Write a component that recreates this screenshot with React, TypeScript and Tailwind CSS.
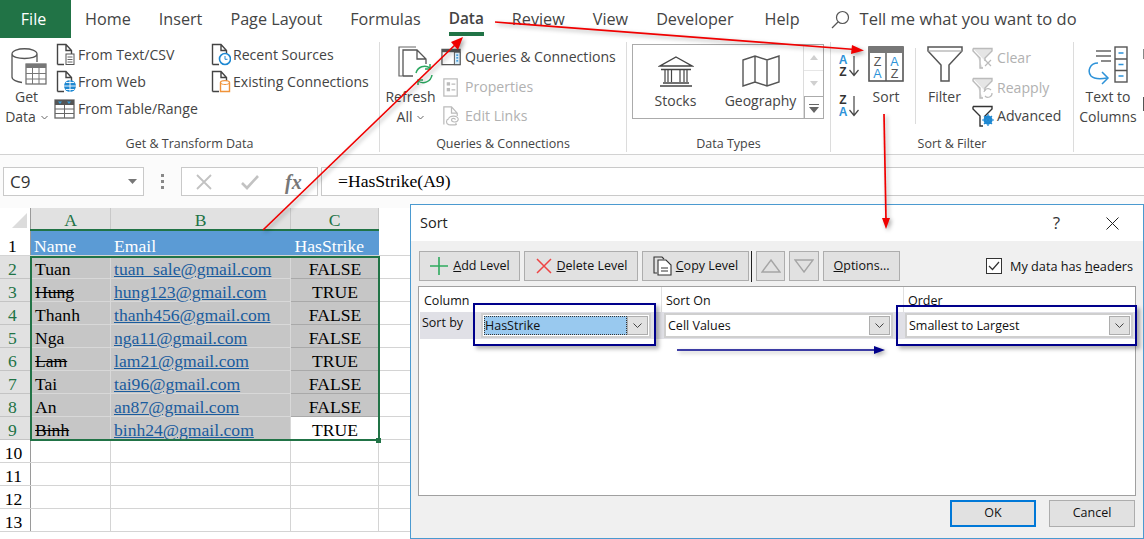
import React from "react";

const UI = "font-['Open_Sans',sans-serif]";

function Doc({ c = "#444", children }: { c?: string; children?: React.ReactNode }) {
  return (
    <svg width="20" height="23" viewBox="0 0 20 23" fill="none" className="shrink-0">
      <path d="M1.5 21.5V1.5H10L15.5 7.5V12M1.5 21.5H8M10 1.5V7.5H15.5" stroke={c} strokeWidth="1.4" />
      {children}
    </svg>
  );
}

function RibbonRow({ icon, text, dim, h = 27 }: { icon: React.ReactNode; text: string; dim?: boolean; h?: number }) {
  return (
    <div className={`flex items-center gap-[2px] whitespace-nowrap text-[14.1px] ${dim ? "text-[#b1b1b1]" : "text-[#444]"}`} style={{ height: h }}>
      {icon}
      <span>{text}</span>
    </div>
  );
}

function Group({ w, label, children, border = true }: { w: number; label: string; children: React.ReactNode; border?: boolean }) {
  return (
    <div className={`flex flex-col shrink-0 mt-[4px] mb-[2px] ${border ? "border-r border-[#dcdcdc]" : ""}`} style={{ width: w }}>
      <div className="flex h-[94px]">{children}</div>
      <div className="h-[16px] flex items-center justify-center text-[12.5px] text-[#444] whitespace-nowrap">{label}</div>
    </div>
  );
}

function BigLabel({ a, b, chev }: { a: string; b?: string; chev?: boolean }) {
  return (
    <div className="flex flex-col items-center text-[14px] leading-[20px] text-[#444] whitespace-nowrap">
      <span>{a}</span>
      {b && (
        <span className="flex items-center gap-[5px]">
          {b}
          {chev && (
            <svg width="7" height="5" viewBox="0 0 7 5" fill="none"><path d="M.5 1l3 3 3-3" stroke="#666" /></svg>
          )}
        </span>
      )}
    </div>
  );
}

function Ribbon() {
  return (
    <div className={`flex h-[117px] border-b border-[#d2d2d2] bg-white shadow-[0_1px_1px_rgba(0,0,0,0.06)] ${UI}`}>
      <Group w={380} label="Get & Transform Data">
        <div className="w-[53px] pt-[4px] flex flex-col items-center shrink-0">
          <svg width="36" height="40" viewBox="0 0 36 40" fill="none" className="ml-[5px]">
            <path d="M1 8C1 1 26 1 26 8V16M1 8V31C1 34 6 36 11 36.5M1 8C1 14 26 14 26 8" stroke="#555" strokeWidth="1.3" />
            <rect x="15" y="18" width="20" height="20" fill="#fff" stroke="#666" strokeWidth="1.2" />
            <rect x="15" y="18" width="20" height="4" fill="#777" />
            <path d="M15 27.5H35M15 33H35M21.5 22V38M28 22V38" stroke="#777" />
          </svg>
          <div className="mt-[1px]"><BigLabel a="Get" b="Data" chev /></div>
        </div>
        <div className="w-[158px] shrink-0 -mt-[1px] pl-[3px]">
          <RibbonRow text="From Text/CSV" icon={
            <Doc><rect x="10" y="11" width="8" height="10.5" fill="#fff" stroke="#555" /><path d="M11.5 14h5M11.5 16.5h5M11.5 19h5" stroke="#666" /></Doc>
          } />
          <RibbonRow text="From Web" icon={
            <Doc><circle cx="14" cy="16" r="6" fill="#1e88d2" /><path d="M8 16h12M14 10v12M10 12.5h8M10 19.5h8" stroke="#fff" strokeWidth=".9" /></Doc>
          } />
          <div className="-ml-[2px]">
            <RibbonRow text="From Table/Range" icon={
              <svg width="22" height="20" viewBox="0 0 22 20" fill="none" className="shrink-0">
                <rect x="1" y="1" width="19" height="18" fill="#fff" stroke="#666" strokeWidth="1.3" />
                <rect x="1" y="1" width="19" height="5" fill="#555" />
                <path d="M4 2.5h4l-2 2.5zM13 2.5h4l-2 2.5z" fill="#35a0e0" />
                <path d="M1 10h19M1 14.5h19M10.5 6v13" stroke="#666" />
              </svg>
            } />
          </div>
        </div>
        <div className="flex-1 -mt-[1px]">
          <RibbonRow text="Recent Sources" icon={
            <Doc><circle cx="14" cy="16" r="5.5" fill="#fff" stroke="#1e88d2" strokeWidth="1.6" /><path d="M14 13v3.3h2.5" stroke="#1e88d2" /></Doc>
          } />
          <RibbonRow text="Existing Connections" icon={
            <Doc><path d="M9.5 12.5C9.5 10 18.5 10 18.5 12.5V21.5H9.5Z" fill="#fff" stroke="#f0933a" strokeWidth="1.4" /><path d="M9.5 13C10.5 15 17.5 15 18.5 13" stroke="#f0933a" /></Doc>
          } />
        </div>
      </Group>

      <Group w={247} label="Queries & Connections">
        <div className="w-[61px] pt-[4px] flex flex-col items-center shrink-0">
          <svg width="38" height="40" viewBox="0 0 38 40" fill="none" className="ml-[12px]">
            <path d="M5 30H1V1H18" stroke="#666" strokeWidth="1.2" />
            <path d="M5 30V4H19L28 13V18M5 30H15M19 4V13H28" stroke="#555" strokeWidth="1.3" />
            <path d="M18 27A9 9 0 0 1 32 22M34 29A9 9 0 0 1 20 35" stroke="#2aa860" strokeWidth="1.5" />
            <path d="M32 18V23H27M20 39V34H25" stroke="#2aa860" strokeWidth="1.5" />
          </svg>
          <div className="mt-[1px]"><BigLabel a="Refresh" b="All" chev /></div>
        </div>
        <div className="flex-1">
          <RibbonRow h={30} text="Queries & Connections" icon={
            <svg width="21" height="20" viewBox="0 0 22 20" fill="none" className="shrink-0 mr-[1px]">
              <rect x="1" y="2" width="19" height="16" fill="#fff" stroke="#555" strokeWidth="1.3" />
              <rect x="1" y="2" width="19" height="3" fill="#555" />
              <rect x="14" y="5" width="6" height="13" fill="#d6ebf8" stroke="#555" />
              <path d="M16 8h2M16 11h2M16 14h2" stroke="#1e88d2" strokeWidth="1.4" />
            </svg>
          } />
          <RibbonRow dim h={29} text="Properties" icon={
            <svg width="21" height="20" viewBox="0 0 22 20" fill="none" className="shrink-0 mr-[1px]">
              <rect x="3" y="1.5" width="14" height="18" fill="#fff" stroke="#bbb" strokeWidth="1.3" />
              <rect x="6" y="5" width="3.5" height="3.5" fill="#bbb" /><rect x="6" y="11" width="3.5" height="3.5" fill="#bbb" />
              <path d="M11 7h4M11 13h4" stroke="#bbb" strokeWidth="1.4" />
            </svg>
          } />
          <RibbonRow dim h={29} text="Edit Links" icon={
            <svg width="21" height="22" viewBox="0 0 22 22" fill="none" className="shrink-0 mr-[1px]">
              <path d="M3 20V1.5H11L17 8V11M11 1.5V8H17" stroke="#bbb" strokeWidth="1.3" />
              <path d="M8 14C8 10 19 10 18 15C17 18 11 18 11 15C11 13 15 13 15 15M15 19C19 20 12 21 8 20C5 19 5 15 8 14" stroke="#bbb" strokeWidth="1.2" />
            </svg>
          } />
        </div>
      </Group>

      <Group w={204} label="Data Types">
        <div className="flex ml-[5px] mt-[2px] h-[75px] w-[192px] border border-[#ababab]">
          <div className="w-[85px] pt-[10px] flex flex-col items-center shrink-0">
            <svg width="36" height="32" viewBox="0 0 36 32" fill="none">
              <path d="M18 2L34 11H2ZM3 14.5H33M5 28H31M2 31H34" stroke="#444" strokeWidth="1.4" />
              <path d="M7 15V27M13.5 15V27M22 15V27M29 15V27M10 15V27M26 15V27" stroke="#444" strokeWidth="1.2" />
            </svg>
            <span className="mt-[4px] text-[14px] leading-[20px] text-[#444]">Stocks</span>
          </div>
          <div className="w-[85px] pt-[10px] flex flex-col items-center shrink-0">
            <svg width="38" height="32" viewBox="0 0 38 32" fill="none">
              <path d="M1 5L13 1L25 5L37 1V27L25 31L13 27L1 31ZM13 1V27M25 5V31" stroke="#555" strokeWidth="1.4" />
            </svg>
            <span className="mt-[4px] text-[14px] leading-[20px] text-[#444] whitespace-nowrap">Geography</span>
          </div>
          <div className="flex-1 border-l border-[#dcdcdc] flex flex-col">
            <div className="h-[26px] border-b border-[#e6e6e6] flex items-center justify-center">
              <svg width="8" height="5" viewBox="0 0 8 5"><path d="M0 5L4 0L8 5Z" fill="#d0d0d0" /></svg>
            </div>
            <div className="h-[25px] flex items-center justify-center">
              <svg width="8" height="5" viewBox="0 0 8 5"><path d="M0 0L4 5L8 0Z" fill="#d0d0d0" /></svg>
            </div>
            <div className="flex-1 border border-[#ababab] -mr-px -mb-px flex items-center justify-center">
              <svg width="10" height="10" viewBox="0 0 10 10"><path d="M0 1h10V2H0zM0 4h10L5 10z" fill="#666" /></svg>
            </div>
          </div>
        </div>
      </Group>

      <Group w={243} label="Sort & Filter">
        <div className="w-[37px] shrink-0 pl-[7px] pt-[12px] flex flex-col gap-[16px]">
          <AZ first="A" second="Z" />
          <AZ first="Z" second="A" />
        </div>
        <div className="pt-[4px] w-[36px] shrink-0 flex flex-col items-center">
          <svg width="36" height="36" viewBox="0 0 36 36" fill="none" className="shrink-0">
            <rect x="1" y="1" width="34" height="34" fill="#fff" stroke="#555" strokeWidth="1.6" />
            <rect x="1" y="1" width="34" height="6" fill="#777" />
            <path d="M18 7V35" stroke="#555" strokeWidth="1.4" />
            <text x="9.5" y="19.500" textAnchor="middle" fontSize="12.500" fill="#555" fontFamily="Liberation Sans">Z</text>
            <text x="9.5" y="32" textAnchor="middle" fontSize="12.500" fill="#2e93d9" fontFamily="Liberation Sans">A</text>
            <text x="26.5" y="19.500" textAnchor="middle" fontSize="12.500" fill="#2e93d9" fontFamily="Liberation Sans">A</text>
            <text x="26.5" y="32" textAnchor="middle" fontSize="12.500" fill="#555" fontFamily="Liberation Sans">Z</text>
          </svg>
          <div className="mt-[5px]"><BigLabel a="Sort" /></div>
        </div>
        <div className="w-px h-[76px] mt-[6px] ml-[11px] bg-[#dcdcdc] shrink-0" />
        <div className="w-[57px] pt-[4px] flex flex-col items-center shrink-0">
          <svg width="36" height="36" viewBox="0 0 36 36" fill="none" className="shrink-0">
            <path d="M1 1H35V5L22 19V35H14V19L1 5Z" fill="#fff" stroke="#555" strokeWidth="1.5" />
            <path d="M1 5H35" stroke="#999" />
          </svg>
          <div className="mt-[5px]"><BigLabel a="Filter" /></div>
        </div>
        <div className="flex-1 -ml-[1px]">
          <RibbonRow dim h={31} text="Clear" icon={<Funnel c="#bbb"><path d="M13 13l6 6M19 13l-6 6" stroke="#bbb" strokeWidth="1.2" /></Funnel>} />
          <RibbonRow dim h={29} text="Reapply" icon={<Funnel c="#bbb"><path d="M12 15A4 4 0 0 1 19 13M20 16A4 4 0 0 1 13 19" stroke="#bbb" strokeWidth="1.2" /></Funnel>} />
          <RibbonRow h={28} text="Advanced" icon={<Funnel c="#333"><circle cx="16" cy="15" r="4.5" fill="#1e88d2" /><circle cx="16" cy="15" r="1.5" fill="#fff" /><path d="M16 9v12M10 15h12M12 11l8 8M20 11l-8 8" stroke="#1e88d2" strokeWidth="1.2" /></Funnel>} />
        </div>
      </Group>

      <Group w={70} label="" border={false}>
        <div className="w-[66px] ml-[1px] pt-[4px] flex flex-col items-center shrink-0">
          <svg width="42" height="40" viewBox="0 0 42 40" fill="none" className="shrink-0">
            <path d="M9 5H24M9 10H24M14 15H24" stroke="#666" strokeWidth="1.4" />
            <rect x="28" y="1" width="12" height="35" fill="#fff" stroke="#555" strokeWidth="1.4" />
            <path d="M28 13H40M28 24.500H40" stroke="#555" strokeWidth="1.4" />
            <path d="M31.500 7H36.500M31.500 18.500H36.500M31.500 30H36.500" stroke="#2e93d9" strokeWidth="1.5" />
            <path d="M11 17C3 17 0 25 4 30C7 33 14 33 20 32" stroke="#2e93d9" strokeWidth="1.5" />
            <path d="M15 26L21 32L15 38" stroke="#2e93d9" strokeWidth="1.5" />
          </svg>
          <div className="mt-[1px]"><BigLabel a="Text to" b="Columns" /></div>
        </div>
        <div className="ml-auto w-[1px] flex flex-col">
          <div className="h-[10px] mt-[7px] bg-[#888]" />
          <div className="h-[14px] mt-[38px] bg-[#555]" />
        </div>
      </Group>
    </div>
  );
}

function AZ({ first, second }: { first: string; second: string }) {
  const col = (l: string) => (l === "A" ? "#2e93d9" : "#333");
  return (
    <svg width="22" height="24" viewBox="0 0 22 24" fill="none" className="shrink-0">
      <text x="5" y="10" textAnchor="middle" fontSize="12" fontWeight="700" fill={col(first)} fontFamily="Liberation Sans">{first}</text>
      <text x="5" y="22" textAnchor="middle" fontSize="12" fontWeight="700" fill={col(second)} fontFamily="Liberation Sans">{second}</text>
      <path d="M16 2V21M11.500 16L16 21.500L20.500 16" stroke="#444" strokeWidth="1.2" />
    </svg>
  );
}

function Funnel({ c, children }: { c: string; children: React.ReactNode }) {
  return (
    <svg width="22" height="22" viewBox="0 0 22 22" fill="none" className="shrink-0 mr-[1px]">
      <path d="M1 1.500H20V4L13 11V14M1 1.500V4L8 11V21H11" stroke={c} strokeWidth="1.4" fill={c === "#bbb" ? "#e5e5e5" : "none"} />
      {children}
    </svg>
  );
}

function Tabs() {
  const names = ["Home", "Insert", "Page Layout", "Formulas"];
  const rest = ["Review", "View", "Developer"];
  return (
    <div className={`flex h-[38px] items-center text-[16.2px] text-[#444] bg-white ${UI}`}>
      <div className="w-[71px] h-full flex items-center justify-center pr-[4px] bg-[#217346] text-white text-[16px]">File</div>
      <div className="flex gap-[28px] ml-[14px] items-center h-full">
        {names.map((n) => <span key={n} className="whitespace-nowrap">{n}</span>)}
        <span className="relative h-full flex items-center font-semibold text-[15.4px]">
          Data
          <span className="absolute left-0 right-0 bottom-[2px] h-[4px] bg-[#217346]" />
        </span>
        {rest.map((n) => <span key={n} className="whitespace-nowrap">{n}</span>)}
        <span className="whitespace-nowrap ml-[3px]">Help</span>
      </div>
      <div className="flex items-center ml-[31px] gap-[10px]">
        <svg width="19" height="19" viewBox="0 0 19 19" fill="none" className="shrink-0">
          <circle cx="11.500" cy="7.500" r="6" stroke="#555" strokeWidth="1.2" />
          <path d="M7 12L1 18" stroke="#555" strokeWidth="1.3" />
        </svg>
        <span className="whitespace-nowrap text-[16.500px]">Tell me what you want to do</span>
      </div>
    </div>
  );
}

function FormulaBar() {
  return (
    <div className="h-[53px] bg-[#fbfbfb] flex items-start pt-[12px] pl-[3px] overflow-hidden">
      <div className={`w-[141px] h-[29px] border border-[#c9c9c9] bg-white flex items-center justify-between pl-[6px] pr-[6px] text-[17px] text-[#333] shrink-0 ${UI}`}>
        C9
        <svg width="9" height="5" viewBox="0 0 9 5"><path d="M0 0H9L4.500 5Z" fill="#777" /></svg>
      </div>
      <div className="w-[37px] h-[29px] flex flex-col items-center justify-center gap-[3px] shrink-0">
        <span className="w-[3px] h-[3px] bg-[#888]" /><span className="w-[3px] h-[3px] bg-[#888]" /><span className="w-[3px] h-[3px] bg-[#888]" />
      </div>
      <div className="w-[137px] h-[29px] border border-[#c9c9c9] bg-white flex items-center pl-[14px] shrink-0">
        <svg width="16" height="16" viewBox="0 0 16 16" fill="none" className="shrink-0"><path d="M1 1L15 15M15 1L1 15" stroke="#c2c2c2" strokeWidth="1.8" /></svg>
        <svg width="18" height="16" viewBox="0 0 18 16" fill="none" className="ml-[29px] shrink-0"><path d="M1 9L6 14L17 2" stroke="#c2c2c2" strokeWidth="2.600" /></svg>
        <span className="ml-[26px] font-['Liberation_Serif',serif] italic font-bold text-[#777] text-[20px] leading-none">fx</span>
      </div>
      <div className="ml-[3px] w-[830px] h-[29px] border border-[#c9c9c9] bg-white flex items-center pl-[16px] shrink-0 font-['Liberation_Serif',serif] text-[17.6px] text-black">
        =HasStrike(A9)
      </div>
    </div>
  );
}

const rows = [
  ["Tuan", "tuan_sale@gmail.com", "FALSE", false],
  ["Hung", "hung123@gmail.com", "TRUE", true],
  ["Thanh", "thanh456@gmail.com", "FALSE", false],
  ["Nga", "nga11@gmail.com", "FALSE", false],
  ["Lam", "lam21@gmail.com", "TRUE", true],
  ["Tai", "tai96@gmail.com", "FALSE", false],
  ["An", "an87@gmail.com", "FALSE", false],
  ["Binh", "binh24@gmail.com", "TRUE", true],
] as const;

function Sheet() {
  const sel = "bg-[#c6c6c6] border-b border-[#a9a9a9]";
  return (
    <div className="relative font-['Liberation_Serif',serif] text-[17.6px] leading-[22px] text-black">
      <div className="flex h-[22px]">
        <div className="w-[31px] bg-white flex items-end justify-end pr-[3px] pb-[2px] border-r border-[#9a9a9a]">
          <svg width="15" height="15" viewBox="0 0 15 15"><path d="M15 0V15H0Z" fill="#dcdcdc" /></svg>
        </div>
        {[["A", 80], ["B", 180], ["C", 88]].map(([l, w]) => (
          <div key={l} className="bg-[#e1e1e1] border-r border-[#c8c8c8] text-center text-[#217346] text-[17.6px] leading-[24px]" style={{ width: w as number }}>{l}</div>
        ))}
      </div>
      <div className="flex h-[26px] border-b border-[#d4d4d4]">
        <div className="w-[31px] border-r border-[#9a9a9a] text-center pr-[5px] pt-[5px]">1</div>
        <div className="w-[80px] bg-[#5b9bd5] text-white pl-[3px] pt-[5px]">Name</div>
        <div className="w-[180px] bg-[#5b9bd5] text-white pl-[3px] pt-[5px]">Email</div>
        <div className="w-[88px] bg-[#5b9bd5] text-white text-right pr-[15px] pt-[5px] whitespace-nowrap">HasStrike</div>
      </div>
      {rows.map(([n, e, v, s], i) => (
        <div key={n} className="flex h-[23px] bg-white">
          <div className="w-[31px] bg-[#e1e1e1] border-r border-b border-[#c4c4c4] text-[#217346] text-center pr-[5px] pt-[2px]">{i + 2}</div>
          <div className={`w-[80px] pl-[4px] pt-[2px] border-r border-[#d8d8d8] ${sel}`}><span className={s ? "line-through" : ""}>{n}</span></div>
          <div className={`w-[180px] pl-[3px] pt-[2px] border-r border-[#d8d8d8] text-[#1a5c9e] underline whitespace-nowrap ${sel}`}>{e}</div>
          <div className={`w-[88px] text-center pt-[2px] ${i === 7 ? "bg-white" : sel}`}>{v}</div>
          <div className="flex-1 border-b border-[#d4d4d4]" />
        </div>
      ))}
      {[10, 11, 12, 13].map((n) => (
        <div key={n} className="flex h-[23px] border-b border-[#d4d4d4]">
          <div className="w-[31px] border-r border-[#9a9a9a] text-center pr-[3px] pt-[2px]">{n}</div>
          <div className="w-[80px] border-r border-[#d4d4d4]" />
          <div className="w-[180px] border-r border-[#d4d4d4]" />
          <div className="w-[88px] border-r border-[#d4d4d4]" />
        </div>
      ))}
      <div className="absolute left-[30px] top-[21px] w-[349px] h-[2px] bg-[#217346]" />
      <div className="absolute left-[30px] top-[48px] w-[350px] h-[185px] border-2 border-[#217346]" />
      <div className="absolute left-[376px] top-[230px] w-[5px] h-[5px] bg-[#217346]" />
    </div>
  );
}

function DlgBtn({ w, children, cls = "" }: { w: number; children: React.ReactNode; cls?: string }) {
  return (
    <div className={`h-[30px] shrink-0 bg-[#e1e1e1] border border-[#adadad] flex items-center justify-center gap-[4px] text-[12.500px] text-[#111] ${cls}`} style={{ width: w }}>
      {children}
    </div>
  );
}

function Combo({ text, w, active }: { text: string; w: number; active?: boolean }) {
  return (
    <div className={`h-[25px] shrink-0 border-2 border-[#cfcfcf] bg-white flex items-stretch p-[1px] ${active ? "border-[#c6c6c6]" : ""}`} style={{ width: w }}>
      <div className={`flex-1 flex items-center pt-[1px] text-[12.500px] text-[#111] whitespace-nowrap ${active ? "bg-[#99c9ef] border border-dotted border-[#333]" : "pl-[1px]"}`}>{text}</div>
      <div className="w-[21px] bg-[#e1e1e1] border border-[#adadad] flex items-center justify-center shrink-0">
        <svg width="9" height="5" viewBox="0 0 9 5" fill="none"><path d="M.5.5l4 4 4-4" stroke="#444" /></svg>
      </div>
    </div>
  );
}

function Dialog() {
  return (
    <div className={`absolute left-[410px] top-[204px] w-[734px] h-[335px] border border-[#4b9ad0] bg-[#f0f0f0] flex flex-col ${UI}`}>
      <div className="h-[36px] bg-white flex items-center shrink-0 text-[#222]">
        <span className="ml-[9px] text-[14.500px]">Sort</span>
        <span className="ml-auto mr-[46px] text-[17px] text-[#333]">?</span>
        <svg width="13" height="13" viewBox="0 0 13 13" fill="none" className="mr-[24px]"><path d="M.5.5l12 12M12.500.5l-12 12" stroke="#222" /></svg>
      </div>
      <div className="flex items-center h-[30px] mt-[10px] ml-[8px] gap-[4px]">
        <DlgBtn w={101}>
          <svg width="20" height="20" viewBox="0 0 20 20" fill="none"><path d="M10 1V19M1 10H19" stroke="#2eaa5e" strokeWidth="1.6" /></svg>
          <span className="pt-[1px]"><span className="underline">A</span>dd Level</span>
        </DlgBtn>
        <DlgBtn w={114}>
          <svg width="18" height="18" viewBox="0 0 18 18" fill="none"><path d="M2 2L16 16M16 2L2 16" stroke="#ee4444" strokeWidth="1.5" /></svg>
          <span className="pt-[1px]"><span className="underline">D</span>elete Level</span>
        </DlgBtn>
        <DlgBtn w={107}>
          <svg width="20" height="20" viewBox="0 0 20 20" fill="none"><path d="M4 17H1V1H9L11 3" stroke="#333" strokeWidth="1.1" /><path d="M5 4H13L18 9V19H5Z" fill="#fff" stroke="#333" strokeWidth="1.1" /><path d="M8 12H15M8 15H15" stroke="#333" /></svg>
          <span className="pt-[1px] -ml-[1px]"><span className="underline">C</span>opy Level</span>
        </DlgBtn>
        <div className="w-[1px] h-[31px] bg-[#222] -ml-[2px]" />
        <DlgBtn w={29}><svg width="20" height="14" viewBox="0 0 20 14" fill="none"><path d="M10 1L19 13H1Z" fill="#e1e1e1" stroke="#a5a5a5" strokeWidth="1.400" /></svg></DlgBtn>
        <DlgBtn w={30}><svg width="20" height="14" viewBox="0 0 20 14" fill="none"><path d="M10 13L19 1H1Z" fill="#e1e1e1" stroke="#a5a5a5" strokeWidth="1.400" /></svg></DlgBtn>
        <DlgBtn w={77}><span className="pt-[1px]"><span className="underline">O</span>ptions...</span></DlgBtn>
        <div className="ml-auto mr-[10px] flex items-center gap-[8px] text-[12.700px] text-[#111] whitespace-nowrap">
          <div className="w-[16px] h-[16px] border border-[#333] bg-white flex items-center justify-center">
            <svg width="12" height="10" viewBox="0 0 12 10" fill="none"><path d="M1 5L4.500 8.500L11 1" stroke="#333" strokeWidth="1.200" /></svg>
          </div>
          <span className="pt-[1px]">My data has <span className="underline">h</span>eaders</span>
        </div>
      </div>
      <div className="mt-[5px] ml-[7px] w-[718px] h-[210px] bg-white border border-[#a0a0a0] flex flex-col">
        <div className="flex h-[25px] text-[12.500px] text-[#111]">
          <div className="w-[243px] pl-[5px] pt-[5px] border-r border-[#e0e0e0]">Column</div>
          <div className="w-[242px] pl-[4px] pt-[5px] border-r border-[#e0e0e0]">Sort On</div>
          <div className="pl-[4px] pt-[5px]">Order</div>
        </div>
        <div className="flex h-[27px] items-start">
          <div className="w-[61px] h-[27px] ml-[1px] bg-[#e0e0e6] pl-[2px] pt-[2px] text-[12.500px] text-[#111] shrink-0">Sort by</div>
          <div className="w-[182px] shrink-0 h-[27px] bg-[#e0e0e6] pt-[1px]"><Combo active text="HasStrike" w={170} /></div>
          <div className="w-[242px] shrink-0 h-[27px] bg-[#e0e0e6] pl-[1px] pt-[1px]"><Combo text="Cell Values" w={229} /></div>
          <div className="flex-1 h-[27px] bg-[#e0e0e6] pt-[1px]"><Combo text="Smallest to Largest" w={228} /></div>
        </div>
      </div>
      <div className="flex justify-end gap-[13px] mt-[4px] mr-[8px]">
        <div className="w-[86px] h-[27px] border-2 border-[#0078d7] bg-[#e1e1e1] flex items-center justify-center text-[12.500px] text-[#111]">OK</div>
        <div className="w-[86px] h-[27px] border border-[#adadad] bg-[#e1e1e1] flex items-center justify-center text-[12.500px] text-[#111]">Cancel</div>
      </div>
      <div className="absolute left-[62px] top-[98px] w-[183px] h-[43px] border-[2.500px] border-[#00008b] shadow-[3px_3px_4px_rgba(0,0,0,0.3)]" />
      <div className="absolute left-[485px] top-[100px] w-[241px] h-[41px] border-[2.500px] border-[#00008b] shadow-[3px_3px_4px_rgba(0,0,0,0.3)]" />
    </div>
  );
}

function Arrows() {
  return (
    <svg width="1144" height="539" viewBox="0 0 1144 539" fill="none" className="absolute left-0 top-0 pointer-events-none drop-shadow-[2px_2px_2px_rgba(0,0,0,0.35)]">
      <path d="M263 230L456 44" stroke="#f00000" strokeWidth="1.700" />
      <path d="M463 37L451 42L458 50Z" fill="#f00000" />
      <path d="M495 22L855 49.500" stroke="#f00000" strokeWidth="1.700" />
      <path d="M864 50.500L852 45L851 54Z" fill="#f00000" />
      <path d="M884 114L886 220" stroke="#f00000" strokeWidth="1.700" />
      <path d="M886 229L882 218H890Z" fill="#f00000" />
      <path d="M677 350H875" stroke="#00008b" strokeWidth="1.700" />
      <path d="M885 350L874 346V354Z" fill="#00008b" />
    </svg>
  );
}

export default function App() {
  return (
    <div className="relative w-[1144px] h-[539px] overflow-hidden bg-white">
      <Tabs />
      <Ribbon />
      <FormulaBar />
      <Sheet />
      <Dialog />
      <Arrows />
    </div>
  );
}
